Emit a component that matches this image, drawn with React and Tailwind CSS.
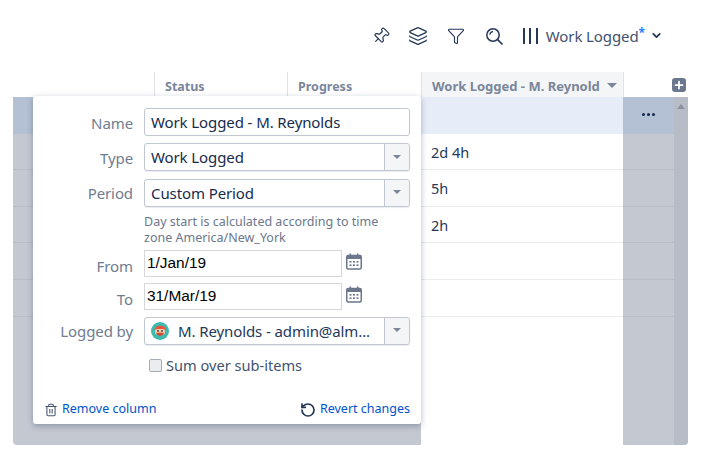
import React from 'react';
import { Pin, Layers, Funnel, ChevronDown, Plus, Trash2, RotateCcw } from 'lucide-react';

const rows = [
  { value: '', head: true },
  { value: '2d 4h' },
  { value: '5h' },
  { value: '2h' },
  { value: '' },
  { value: '' },
];

const Label = ({ children }) => (
  <div className="w-[100px] shrink-0 pt-[1px] text-right text-[15px] tracking-[-0.1px] leading-[20px] text-[#707c90]">{children}</div>
);

const Caret = () => (
  <div className="w-[25px] shrink-0 self-stretch flex items-center justify-center bg-[#f4f5f7] border-l border-[#c1c7d0] rounded-r-[3px]">
    <div className="w-0 h-0 border-x-[4px] border-x-transparent border-t-[4px] border-t-[#7a869a] -mt-[1px]" />
  </div>
);

const Select = ({ children }) => (
  <div className="ml-[11px] flex-1 h-[28px] flex items-center bg-white border border-[#c1c7d0] rounded-[3px] shadow-[0_1px_1px_rgba(9,30,66,0.08)]">
    <div className="flex-1 min-w-0 flex items-center pl-[6px] pt-[1px] text-[15px] tracking-[-0.1px] text-[#172b4d] whitespace-nowrap">{children}</div>
    <Caret />
  </div>
);

const CalendarIcon = () => (
  <svg width="16" height="17" viewBox="0 0 16 17" className="ml-[4px] -mt-[4px] shrink-0">
    <rect x="0.75" y="2.5" width="14.5" height="13.5" rx="1.5" fill="none" stroke="#6b778c" strokeWidth="1.5" />
    <rect x="0.75" y="2.5" width="14.5" height="3.5" fill="#6b778c" />
    <rect x="3.5" y="0.5" width="1.6" height="3" fill="#6b778c" />
    <rect x="10.9" y="0.5" width="1.6" height="3" fill="#6b778c" />
    <g fill="#6b778c">
      <rect x="3.5" y="8" width="2" height="1.6" />
      <rect x="7" y="8" width="2" height="1.6" />
      <rect x="10.5" y="8" width="2" height="1.6" />
      <rect x="3.5" y="11.4" width="2" height="1.6" />
      <rect x="7" y="11.4" width="2" height="1.6" />
      <rect x="10.5" y="11.4" width="2" height="1.6" />
    </g>
  </svg>
);

const SearchIcon = () => (
  <svg width="19" height="19" viewBox="0 0 19 19" fill="none" stroke="#253858" className="ml-[20px] shrink-0">
    <circle cx="8" cy="8" r="6.2" strokeWidth="1.5" />
    <path d="M4.8 7.6 A3.6 3.6 0 0 1 8 4.6" strokeWidth="1.2" />
    <path d="M12.6 12.6 L17.5 17.5" strokeWidth="1.7" />
  </svg>
);

const DateRow = ({ label, value }) => (
  <div className="flex items-center h-[27px]">
    <Label>
      <span className="relative top-[2px]">{label}</span>
    </Label>
    <div className="ml-[11px] w-[198px] h-[27px] flex items-center pl-[2px] bg-white border border-[#d4d6da] text-[15.4px] text-black font-['Liberation_Sans',sans-serif]">
      {value}
    </div>
    <CalendarIcon />
  </div>
);

const Avatar = () => (
  <svg width="18" height="18" viewBox="0 0 18 18" className="shrink-0">
    <circle cx="9" cy="9" r="9" fill="#3fb8ae" />
    <path d="M3.5 8 C3.5 2.5 14.5 2.5 14.5 7 L14.5 8 Z" fill="#e8553f" />
    <rect x="4" y="7" width="10" height="5.5" rx="2" fill="#f8c9a4" />
    <path d="M4.5 10.5 Q9 17.5 13.5 10.5 L11.5 11 Q9 9.8 6.5 11 Z" fill="#d2492f" />
    <circle cx="7" cy="9" r="0.9" fill="#253858" />
    <circle cx="11" cy="9" r="0.9" fill="#253858" />
  </svg>
);

const App = () => {
  return (
    <div className="relative w-[723px] h-[468px] bg-white overflow-hidden font-['Noto_Sans',sans-serif]">
      {/* Toolbar */}
      <div className="h-[72px] flex items-center justify-end pr-[60px] text-[#253858]">
        <Pin className="w-[18px] h-[18px] rotate-45" strokeWidth={1.6} />
        <Layers className="ml-[18px] w-[20px] h-[20px]" strokeWidth={1.5} />
        <Funnel className="ml-[19px] w-[18px] h-[18px]" strokeWidth={1.5} />
        <SearchIcon />
        <div className="ml-[19px] flex gap-[4.5px] h-[16px]">
          <div className="w-[2px] bg-[#253858]" />
          <div className="w-[2px] bg-[#253858]" />
          <div className="w-[2px] bg-[#253858]" />
        </div>
        <div className="ml-[8px] mt-[2px] text-[15px] tracking-[-0.1px] leading-[20px] text-[#42526e]">
          Work Logged<span className="relative -top-[5px] text-[12px] font-bold text-[#2684ff]">*</span>
        </div>
        <ChevronDown className="ml-[5px] -mt-[2px] w-[13px] h-[13px] text-[#253858]" strokeWidth={3.4} />
      </div>

      {/* Column headers */}
      <div className="h-[25px] flex pl-[13px] text-[12.5px] font-bold text-[#7a869a]">
        <div className="w-[141px]" />
        <div className="w-[133px] flex items-center pl-[10px] pt-[5px] border-l border-[#dfe1e6]">Status</div>
        <div className="w-[134px] flex items-center pl-[10px] pt-[5px] border-l border-[#dfe1e6]">Progress</div>
        <div className="w-[203px] flex items-center pl-[10px] pt-[5px] gap-[7px] text-[13px] bg-[#f4f5f7] border-x border-[#dfe1e6] whitespace-nowrap">
          Work Logged - M. Reynold
          <div className="-mt-[4px] w-0 h-0 border-x-[5px] border-x-transparent border-t-[5px] border-t-[#7a869a]" />
        </div>
        <div className="ml-[48px] mt-[6px] w-[14px] h-[14px] rounded-[3px] bg-[#6b778c] flex items-center justify-center">
          <Plus className="w-[12px] h-[12px] text-white" strokeWidth={3.5} />
        </div>
      </div>

      {/* Table behind the dimmed overlay */}
      <div className="ml-[13px] w-[675px] h-[348px] flex rounded-b-[4px] overflow-hidden bg-[#c4c8d1]">
        <div className="flex-1 flex flex-col">
          {rows.map((row, i) => (
            <div key={i} className={`h-[36.6px] flex shrink-0 ${row.head ? 'bg-[#b4c0d4]' : 'border-b border-[#b9bdc8]'}`}>
              <div className="w-[408px]" />
              <div className={`w-[202px] flex items-center pl-[10px] pt-[2px] text-[14.5px] text-[#253858] ${row.head ? 'bg-[#e7edf8]' : 'bg-white border-b border-[#ebecf0] -mb-px'}`}>
                {row.value}
              </div>
              <div className="flex-1 flex items-center justify-center">
                {row.head && (
                  <div className="flex gap-[2px] -mt-[1px]">
                    <div className="w-[3px] h-[3px] rounded-full bg-[#172b4d]" />
                    <div className="w-[3px] h-[3px] rounded-full bg-[#172b4d]" />
                    <div className="w-[3px] h-[3px] rounded-full bg-[#172b4d]" />
                  </div>
                )}
              </div>
            </div>
          ))}
          <div className="flex-1 flex">
            <div className="w-[408px]" />
            <div className="w-[202px] bg-white" />
          </div>
        </div>
        <div className="w-[14px] bg-[#b8bcc7] flex justify-center pt-[7px]">
          <div className="w-0 h-0 border-x-[4px] border-x-transparent border-b-[5px] border-b-[#8c919c]" />
        </div>
      </div>

      {/* Column settings popover */}
      <div className="absolute left-[33px] top-[96px] w-[388px] h-[328px] flex flex-col bg-white rounded-[3px] pt-[12px] pr-[11px] shadow-[0_2px_6px_rgba(9,30,66,0.3)]">
        <div className="flex items-center h-[28px]">
          <Label>Name</Label>
          <div className="ml-[11px] flex-1 h-[28px] flex items-center pl-[6px] pt-[1px] border border-[#c1c7d0] rounded-[3px] text-[15px] tracking-[-0.1px] text-[#172b4d]">
            Work Logged - M. Reynolds
          </div>
        </div>
        <div className="mt-[7px] flex items-center h-[28px]">
          <Label>Type</Label>
          <Select>Work Logged</Select>
        </div>
        <div className="mt-[7.5px] flex items-center h-[28px]">
          <Label>Period</Label>
          <Select>Custom Period</Select>
        </div>
        <div className="mt-[7px] ml-[111px] text-[12.5px] leading-[16px] text-[#6b778c]">
          Day start is calculated according to time
          <br />
          zone America/New_York
        </div>
        <div className="mt-[4px]">
          <DateRow label="From" value="1/Jan/19" />
        </div>
        <div className="mt-[6px]">
          <DateRow label="To" value="31/Mar/19" />
        </div>
        <div className="mt-[7px] flex items-center h-[28px]">
          <Label>Logged by</Label>
          <Select>
            <Avatar />
            <span className="ml-[9px] text-[#253858]">M. Reynolds - admin@alm...</span>
          </Select>
        </div>
        <div className="mt-[11px] ml-[116px] flex items-center gap-[4px] h-[20px] text-[14.6px] text-[#42526e]">
          <div className="w-[13px] h-[13px] rounded-[2px] bg-[#ebecf0] border border-[#a5adba]" />
          Sum over sub-items
        </div>
        <div className="mt-auto mb-[5px] pl-[11px] flex items-center justify-between text-[12.5px] text-[#0052cc]">
          <div className="flex items-center gap-[4px]">
            <Trash2 className="w-[14px] h-[16px] text-[#42526e]" strokeWidth={1.8} />
            Remove column
          </div>
          <div className="flex items-center gap-[4px]">
            <RotateCcw className="w-[16px] h-[16px] text-[#253858]" strokeWidth={2.6} />
            Revert changes
          </div>
        </div>
      </div>
    </div>
  );
};

export default App;
